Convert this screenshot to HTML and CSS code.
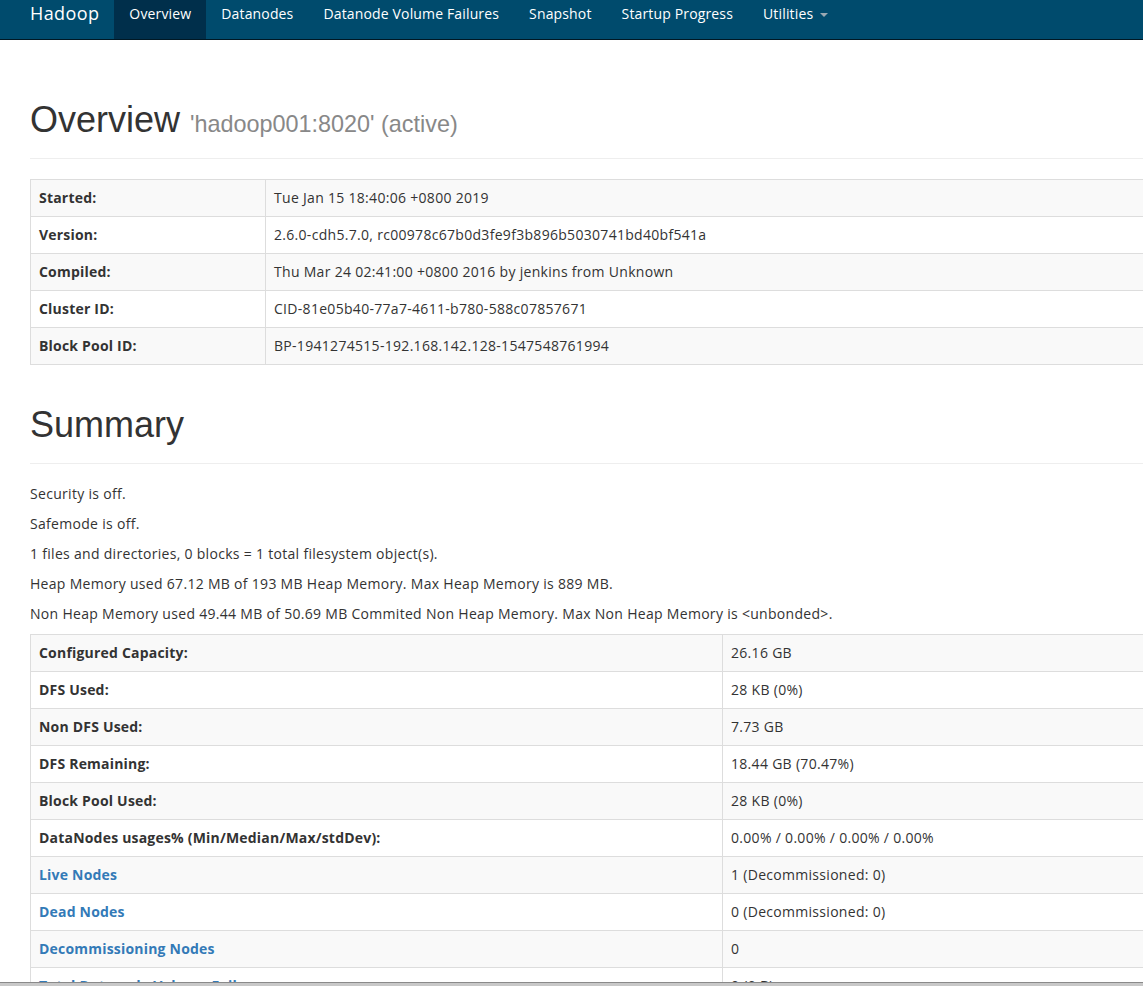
FILE: index.html
```html
<!DOCTYPE html>
<html>
<head>
<meta charset="utf-8">
<title>Namenode information</title>
<link rel="stylesheet" href="styles.css">
</head>
<body>
<header class="navbar">
  <div class="navbar-inner">
    <a class="brand" href="#">Hadoop</a>
    <ul class="nav">
      <li class="active"><a href="#">Overview</a></li>
      <li><a href="#">Datanodes</a></li>
      <li><a href="#">Datanode Volume Failures</a></li>
      <li><a href="#">Snapshot</a></li>
      <li><a href="#">Startup Progress</a></li>
      <li><a href="#">Utilities <span class="caret"></span></a></li>
    </ul>
  </div>
</header>

<main class="container">
  <div class="page-header first">
    <h1>Overview <small>'hadoop001:8020' (active)</small></h1>
  </div>
  <table class="table table-overview">
    <tr><th>Started:</th><td>Tue Jan 15 18:40:06 +0800 2019</td></tr>
    <tr><th>Version:</th><td>2.6.0-cdh5.7.0, rc00978c67b0d3fe9f3b896b5030741bd40bf541a</td></tr>
    <tr><th>Compiled:</th><td>Thu Mar 24 02:41:00 +0800 2016 by jenkins from Unknown</td></tr>
    <tr><th>Cluster ID:</th><td>CID-81e05b40-77a7-4611-b780-588c07857671</td></tr>
    <tr><th>Block Pool ID:</th><td>BP-1941274515-192.168.142.128-1547548761994</td></tr>
  </table>

  <div class="page-header">
    <h1>Summary</h1>
  </div>
  <p>Security is off.</p>
  <p>Safemode is off.</p>
  <p>1 files and directories, 0 blocks = 1 total filesystem object(s).</p>
  <p>Heap Memory used 67.12 MB of 193 MB Heap Memory. Max Heap Memory is 889 MB.</p>
  <p>Non Heap Memory used 49.44 MB of 50.69 MB Commited Non Heap Memory. Max Non Heap Memory is &lt;unbonded&gt;.</p>
  <table class="table table-summary">
    <tr><th>Configured Capacity:</th><td>26.16 GB</td></tr>
    <tr><th>DFS Used:</th><td>28 KB (0%)</td></tr>
    <tr><th>Non DFS Used:</th><td>7.73 GB</td></tr>
    <tr><th>DFS Remaining:</th><td>18.44 GB (70.47%)</td></tr>
    <tr><th>Block Pool Used:</th><td>28 KB (0%)</td></tr>
    <tr><th>DataNodes usages% (Min/Median/Max/stdDev):</th><td>0.00% / 0.00% / 0.00% / 0.00%</td></tr>
    <tr><th><a href="#">Live Nodes</a></th><td>1 (Decommissioned: 0)</td></tr>
    <tr><th><a href="#">Dead Nodes</a></th><td>0 (Decommissioned: 0)</td></tr>
    <tr><th><a href="#">Decommissioning Nodes</a></th><td>0</td></tr>
    <tr><th><a href="#">Total Datanode Volume Failures</a></th><td>0 (0 B)</td></tr>
    <tr><th>Number of Under-Replicated Blocks</th><td>0</td></tr>
    <tr><th>Number of Blocks Pending Deletion</th><td>0</td></tr>
  </table>
</main>
<div class="window-edge"></div>
</body>
</html>
```

FILE: styles.css
```css
* { box-sizing: border-box; }
html, body { margin: 0; padding: 0; }
body {
  font-family: "Open Sans", "Noto Sans", sans-serif;
  font-size: 14px;
  line-height: 20px;
  letter-spacing: 0.3px;
  color: #333;
  background: #fff;
  overflow-x: hidden;
}
a { color: #337ab7; text-decoration: none; }

.navbar {
  background: #004b6d;
  border-bottom: 1px solid #001824;
  height: 40px;
}
.navbar-inner {
  display: flex;
  align-items: stretch;
  width: 1170px;
  margin-left: 15px;
  height: 39px;
}
.brand {
  font-size: 18px;
  color: #fff;
  padding: 0 15px;
  line-height: 27px;
  letter-spacing: 0.4px;
}
.nav {
  display: flex;
  list-style: none;
  margin: 0;
  padding: 0;
}
.nav li a {
  display: block;
  height: 39px;
  padding: 4px 15px 0;
  color: #fff;
  font-size: 14px;
  line-height: 20px;
  letter-spacing: 0.15px;
}
.nav li.active a { background: #002f4b; }
.caret {
  display: inline-block;
  width: 0; height: 0;
  margin-left: 3px;
  vertical-align: middle;
  border-top: 4px solid #9aa8b2;
  border-left: 4px solid transparent;
  border-right: 4px solid transparent;
}

.container {
  width: 1170px;
  margin-left: 15px;
  padding: 0 15px;
}
.page-header {
  margin: 40px 0 20px;
  padding-bottom: 9px;
  border-bottom: 1px solid #eee;
}
.page-header.first { margin-top: 60px; padding-bottom: 8px; }
h1 {
  font-family: "Liberation Sans", Arial, sans-serif;
  font-size: 36px;
  font-weight: 400;
  line-height: 39.6px;
  letter-spacing: 0;
  margin: 0 0 10px;
  color: #333;
}
h1 small {
  font-size: 65%;
  line-height: 1;
  color: #888;
  font-weight: 400;
}
p { margin: 0 0 10px; }

.table {
  width: 100%;
  border-collapse: collapse;
  border-spacing: 0;
  margin-bottom: 20px;
}
.table th, .table td {
  border: 1px solid #ddd;
  padding: 8px;
  text-align: left;
  vertical-align: top;
  line-height: 20px;
}
.table th { font-weight: 700; letter-spacing: 0.2px; }
.table tr:nth-child(odd) { background: #f9f9f9; }
.table-overview th { width: 235px; }
.table-summary th { width: 692px; }

.window-edge {
  position: fixed;
  left: 0; right: 0; bottom: 0;
  height: 4px;
  background: #c8c8c8;
  border-top: 1px solid #8a8a8a;
}
```
